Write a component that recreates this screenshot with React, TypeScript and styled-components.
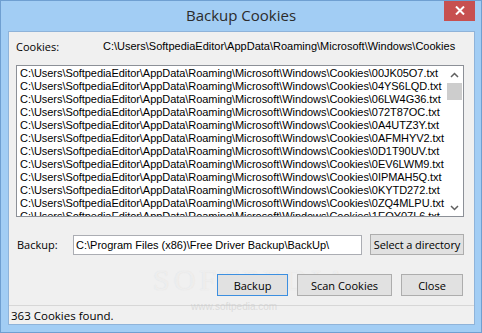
import styled, { createGlobalStyle } from "styled-components";

const GlobalStyle = createGlobalStyle`
  html, body {
    margin: 0;
    padding: 0;
    background: #a2cdf4;
  }
`;

const Window = styled.div`
  position: relative;
  width: 482px;
  height: 333px;
  box-sizing: border-box;
  background: #a2cdf4;
  border: 1px solid #6f9fd1;
  display: flex;
  flex-direction: column;
  overflow: hidden;
`;

const TitleBar = styled.div`
  height: 30px;
  display: grid;
  grid-template-columns: 1fr auto 1fr;
  align-items: start;
`;

const Title = styled.div`
  grid-column: 2;
  padding-top: 4px;
  font-family: "Open Sans", "Noto Sans", sans-serif;
  font-size: 15px;
  color: #2b2b2b;
`;

const CloseBtn = styled.div`
  grid-column: 3;
  justify-self: end;
  margin-right: 6px;
  margin-top: -1px;
  width: 31px;
  height: 21px;
  background: #c75050;
  display: flex;
  align-items: center;
  justify-content: center;
`;

const Client = styled.div`
  flex: 1;
  margin: 0 6px 7px 7px;
  background: #f0f0f0;
  border: 1px solid #8fb3d9;
  display: flex;
  flex-direction: column;
  padding: 0 10px 0 7px;
  font-family: "Liberation Sans", Arial, sans-serif;
  color: #000;
`;

const HeaderRow = styled.div`
  height: 18px;
  margin-top: 5px;
  display: flex;
  align-items: center;
  font-family: "Open Sans", "Noto Sans", sans-serif;
  font-size: 11px;
`;

const HeaderLabel = styled.div`
  width: 87px;
  flex-shrink: 0;
`;

const PathText = styled.div`
  font-family: "Liberation Sans", Arial, sans-serif;
  font-size: 11px;
  white-space: nowrap;
`;

const ListBox = styled.div`
  margin-top: 10px;
  height: 152px;
  box-sizing: border-box;
  background: #fff;
  border: 1px solid #8c9097;
  display: flex;
  overflow: hidden;
`;

const ListItems = styled.div`
  flex: 1;
  padding: 1px 0 0 3px;
  overflow: hidden;
`;

const ListRow = styled.div`
  height: 13px;
  line-height: 13px;
  font-size: 11px;
  white-space: nowrap;
  letter-spacing: -0.05px;
`;

const ScrollBar = styled.div`
  width: 17px;
  display: flex;
  flex-direction: column;
  align-items: center;
  background: #fff;
`;

const ArrowBox = styled.div`
  height: 17px;
  width: 17px;
  display: flex;
  align-items: center;
  justify-content: center;
`;

const Track = styled.div`
  flex: 1;
  width: 100%;
  display: flex;
  flex-direction: column;
  align-items: center;
`;

const Thumb = styled.div`
  width: 15px;
  height: 17px;
  background: #cdcdcd;
`;

const BackupRow = styled.div`
  margin-top: 17px;
  height: 21px;
  display: flex;
  align-items: center;
`;

const BackupLabel = styled.div`
  width: 56px;
  margin-left: 1px;
  font-family: "Open Sans", "Noto Sans", sans-serif;
  font-size: 11px;
`;

const PathInput = styled.div`
  width: 289px;
  height: 20px;
  box-sizing: border-box;
  background: #fff;
  border: 1px solid #abadb3;
  padding-left: 2px;
  display: flex;
  align-items: center;
  font-size: 11px;
  white-space: nowrap;
`;

const Button = styled.div<{ $w: number; $focus?: boolean }>`
  position: relative;
  z-index: 1;
  width: ${(p) => p.$w}px;
  height: 22px;
  box-sizing: border-box;
  background: #e1e1e1;
  border: 1px solid ${(p) => (p.$focus ? "#3c8fe0" : "#adadad")};
  display: flex;
  align-items: center;
  justify-content: center;
  white-space: nowrap;
  font-family: "Open Sans", "Noto Sans", sans-serif;
  font-size: 11px;
  color: #000;
`;

const SelectBtn = styled(Button)`
  margin-left: 8px;
  height: 21px;
  letter-spacing: -0.1px;
`;

const ButtonRow = styled.div`
  margin-top: 19px;
  display: flex;
  justify-content: flex-end;
  gap: 9px;
  padding-right: 1px;
`;

const StatusBar = styled.div`
  margin-top: auto;
  margin-left: -7px;
  margin-right: -10px;
  height: 18px;
  border-top: 1px solid #d7d7d7;
  padding-left: 2px;
  display: flex;
  align-items: center;
  font-family: "Open Sans", "Noto Sans", sans-serif;
  font-size: 11.5px;
`;

const Watermark = styled.div`
  position: absolute;
  left: 152px;
  top: 262px;
  font-family: "Liberation Serif", serif;
  font-size: 30px;
  letter-spacing: 4px;
  color: rgba(255, 255, 255, 0.5);
  text-shadow: 0 0 1px rgba(170, 170, 170, 0.3);
  pointer-events: none;
`;

const WatermarkUrl = styled.div`
  position: absolute;
  left: 190px;
  top: 300px;
  font-family: "Liberation Sans", sans-serif;
  font-size: 10px;
  color: rgba(200, 200, 200, 0.55);
  pointer-events: none;
`;

const files = [
  "00JK05O7",
  "04YS6LQD",
  "06LW4G36",
  "072T87OC",
  "0A4UTZ3Y",
  "0AFMHYV2",
  "0D1T90UV",
  "0EV6LWM9",
  "0IPMAH5Q",
  "0KYTD272",
  "0ZQ4MLPU",
  "1EOY07L6",
];

const base = "C:\\Users\\SoftpediaEditor\\AppData\\Roaming\\Microsoft\\Windows\\Cookies";

export default function App() {
  return (
    <>
      <GlobalStyle />
      <Window>
        <TitleBar>
          <Title>Backup Cookies</Title>
          <CloseBtn>
            <svg width="10" height="9" viewBox="0 0 10 9">
              <path d="M1 0.5 L9 8.5 M9 0.5 L1 8.5" stroke="#fff" strokeWidth="2" />
            </svg>
          </CloseBtn>
        </TitleBar>
        <Client>
          <HeaderRow>
            <HeaderLabel>Cookies:</HeaderLabel>
            <PathText>{base}</PathText>
          </HeaderRow>
          <ListBox>
            <ListItems>
              {files.map((f) => (
                <ListRow key={f}>{`${base}\\${f}.txt`}</ListRow>
              ))}
            </ListItems>
            <ScrollBar>
              <ArrowBox>
                <svg width="9" height="6" viewBox="0 0 9 6">
                  <path d="M1 5 L4.5 1.5 L8 5" stroke="#606060" strokeWidth="1.5" fill="none" />
                </svg>
              </ArrowBox>
              <Track>
                <Thumb />
              </Track>
              <ArrowBox>
                <svg width="9" height="6" viewBox="0 0 9 6">
                  <path d="M1 1 L4.5 4.5 L8 1" stroke="#606060" strokeWidth="1.5" fill="none" />
                </svg>
              </ArrowBox>
            </ScrollBar>
          </ListBox>
          <BackupRow>
            <BackupLabel>Backup:</BackupLabel>
            <PathInput>C:\Program Files (x86)\Free Driver Backup\BackUp\</PathInput>
            <SelectBtn $w={94}>Select a directory</SelectBtn>
          </BackupRow>
          <ButtonRow>
            <Button $w={71} $focus>
              Backup
            </Button>
            <Button $w={95}>Scan Cookies</Button>
            <Button $w={62}>Close</Button>
          </ButtonRow>
          <StatusBar>363 Cookies found.</StatusBar>
        </Client>
        <Watermark>SOFTPEDIA</Watermark>
        <WatermarkUrl>www.softpedia.com</WatermarkUrl>
      </Window>
    </>
  );
}
